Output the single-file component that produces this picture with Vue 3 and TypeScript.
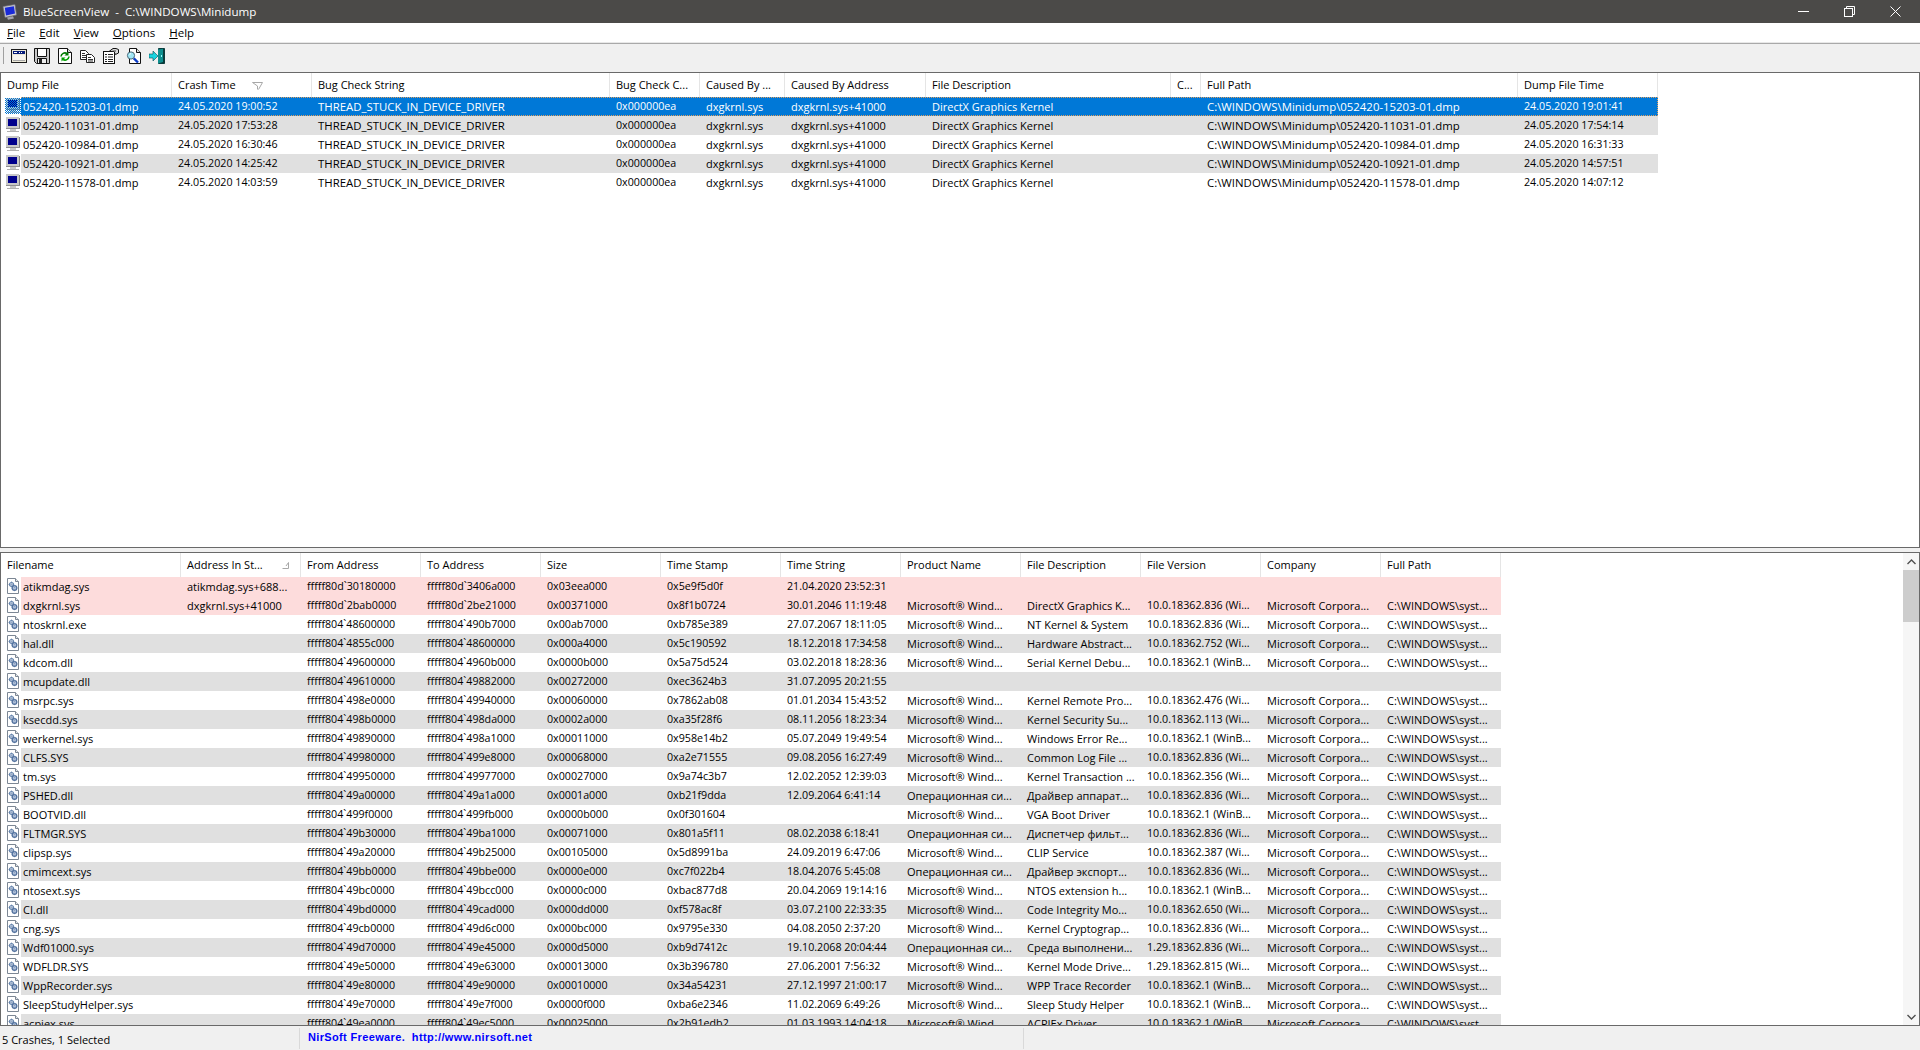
<script setup lang="ts">
interface Menu { label: string; key: string; rest: string }
const menus: Menu[] = [
  { label: 'File', key: 'F', rest: 'ile' },
  { label: 'Edit', key: 'E', rest: 'dit' },
  { label: 'View', key: 'V', rest: 'iew' },
  { label: 'Options', key: 'O', rest: 'ptions' },
  { label: 'Help', key: 'H', rest: 'elp' },
];

const titleText = 'BlueScreenView  -  C:\\WINDOWS\\Minidump';
const linkText = 'NirSoft Freeware.  http://www.nirsoft.net';

const tools = ['t-window', 't-floppy', 't-refresh', 't-copy', 't-props', 't-search', 't-exit'];

const topHeads = ['Dump File', 'Crash Time', 'Bug Check String', 'Bug Check C...', 'Caused By ...', 'Caused By Address', 'File Description', 'C...', 'Full Path', 'Dump File Time'];
const topCls = ['', 'n', 'w', 'n', '', '', '', '', 'w', 'n'];
const crash = [
  ['15203', '19:00:52', '19:01:41'],
  ['11031', '17:53:28', '17:54:14'],
  ['10984', '16:30:46', '16:31:33'],
  ['10921', '14:25:42', '14:57:51'],
  ['11578', '14:03:59', '14:07:12'],
];
const topRows: string[][] = crash.map(([id, a, b]) => [
  `052420-${id}-01.dmp`, `24.05.2020 ${a}`, 'THREAD_STUCK_IN_DEVICE_DRIVER', '0x000000ea', 'dxgkrnl.sys',
  'dxgkrnl.sys+41000', 'DirectX Graphics Kernel', '', `C:\\WINDOWS\\Minidump\\052420-${id}-01.dmp`, `24.05.2020 ${b}`,
]);

const botHeads = ['Filename', 'Address In St...', 'From Address', 'To Address', 'Size', 'Time Stamp', 'Time String', 'Product Name', 'File Description', 'File Version', 'Company', 'Full Path'];
const botCls = ['', '', 'n', 'n', 'n', 'n', 'n', '', '', 'n', '', ''];
const MS = 'Microsoft® Wind...';
const OS = 'Операционная си...';
const raw: [string, string, string, string, string, string, string, string, string, string][] = [
  ['atikmdag.sys', 'atikmdag.sys+688...', "fffff80d`30180000", "fffff80d`3406a000", '0x03eea000', '0x5e9f5d0f', '21.04.2020 23:52:31', '', '', ''],
  ['dxgkrnl.sys', 'dxgkrnl.sys+41000', "fffff80d`2bab0000", "fffff80d`2be21000", '0x00371000', '0x8f1b0724', '30.01.2046 11:19:48', MS, 'DirectX Graphics K...', '10.0.18362.836 (Wi...'],
  ['ntoskrnl.exe', '', "fffff804`48600000", "fffff804`490b7000", '0x00ab7000', '0xb785e389', '27.07.2067 18:11:05', MS, 'NT Kernel & System', '10.0.18362.836 (Wi...'],
  ['hal.dll', '', "fffff804`4855c000", "fffff804`48600000", '0x000a4000', '0x5c190592', '18.12.2018 17:34:58', MS, 'Hardware Abstract...', '10.0.18362.752 (Wi...'],
  ['kdcom.dll', '', "fffff804`49600000", "fffff804`4960b000", '0x0000b000', '0x5a75d524', '03.02.2018 18:28:36', MS, 'Serial Kernel Debu...', '10.0.18362.1 (WinB...'],
  ['mcupdate.dll', '', "fffff804`49610000", "fffff804`49882000", '0x00272000', '0xec3624b3', '31.07.2095 20:21:55', '', '', ''],
  ['msrpc.sys', '', "fffff804`498e0000", "fffff804`49940000", '0x00060000', '0x7862ab08', '01.01.2034 15:43:52', MS, 'Kernel Remote Pro...', '10.0.18362.476 (Wi...'],
  ['ksecdd.sys', '', "fffff804`498b0000", "fffff804`498da000", '0x0002a000', '0xa35f28f6', '08.11.2056 18:23:34', MS, 'Kernel Security Su...', '10.0.18362.113 (Wi...'],
  ['werkernel.sys', '', "fffff804`49890000", "fffff804`498a1000", '0x00011000', '0x958e14b2', '05.07.2049 19:49:54', MS, 'Windows Error Re...', '10.0.18362.1 (WinB...'],
  ['CLFS.SYS', '', "fffff804`49980000", "fffff804`499e8000", '0x00068000', '0xa2e71555', '09.08.2056 16:27:49', MS, 'Common Log File ...', '10.0.18362.836 (Wi...'],
  ['tm.sys', '', "fffff804`49950000", "fffff804`49977000", '0x00027000', '0x9a74c3b7', '12.02.2052 12:39:03', MS, 'Kernel Transaction ...', '10.0.18362.356 (Wi...'],
  ['PSHED.dll', '', "fffff804`49a00000", "fffff804`49a1a000", '0x0001a000', '0xb21f9dda', '12.09.2064 6:41:14', OS, 'Драйвер аппарат...', '10.0.18362.836 (Wi...'],
  ['BOOTVID.dll', '', "fffff804`499f0000", "fffff804`499fb000", '0x0000b000', '0x0f301604', '', MS, 'VGA Boot Driver', '10.0.18362.1 (WinB...'],
  ['FLTMGR.SYS', '', "fffff804`49b30000", "fffff804`49ba1000", '0x00071000', '0x801a5f11', '08.02.2038 6:18:41', OS, 'Диспетчер фильт...', '10.0.18362.836 (Wi...'],
  ['clipsp.sys', '', "fffff804`49a20000", "fffff804`49b25000", '0x00105000', '0x5d8991ba', '24.09.2019 6:47:06', MS, 'CLIP Service', '10.0.18362.387 (Wi...'],
  ['cmimcext.sys', '', "fffff804`49bb0000", "fffff804`49bbe000", '0x0000e000', '0xc7f022b4', '18.04.2076 5:45:08', OS, 'Драйвер экспорт...', '10.0.18362.836 (Wi...'],
  ['ntosext.sys', '', "fffff804`49bc0000", "fffff804`49bcc000", '0x0000c000', '0xbac877d8', '20.04.2069 19:14:16', MS, 'NTOS extension h...', '10.0.18362.1 (WinB...'],
  ['CI.dll', '', "fffff804`49bd0000", "fffff804`49cad000", '0x000dd000', '0xf578ac8f', '03.07.2100 22:33:35', MS, 'Code Integrity Mo...', '10.0.18362.650 (Wi...'],
  ['cng.sys', '', "fffff804`49cb0000", "fffff804`49d6c000", '0x000bc000', '0x9795e330', '04.08.2050 2:37:20', MS, 'Kernel Cryptograp...', '10.0.18362.836 (Wi...'],
  ['Wdf01000.sys', '', "fffff804`49d70000", "fffff804`49e45000", '0x000d5000', '0xb9d7412c', '19.10.2068 20:04:44', OS, 'Среда выполнени...', '1.29.18362.836 (Wi...'],
  ['WDFLDR.SYS', '', "fffff804`49e50000", "fffff804`49e63000", '0x00013000', '0x3b396780', '27.06.2001 7:56:32', MS, 'Kernel Mode Drive...', '1.29.18362.815 (Wi...'],
  ['WppRecorder.sys', '', "fffff804`49e80000", "fffff804`49e90000", '0x00010000', '0x34a54231', '27.12.1997 21:00:17', MS, 'WPP Trace Recorder', '10.0.18362.1 (WinB...'],
  ['SleepStudyHelper.sys', '', "fffff804`49e70000", "fffff804`49e7f000", '0x0000f000', '0xba6e2346', '11.02.2069 6:49:26', MS, 'Sleep Study Helper', '10.0.18362.1 (WinB...'],
  ['acpiex.sys', '', "fffff804`49ea0000", "fffff804`49ec5000", '0x00025000', '0x2b91edb2', '01.03.1993 14:04:18', MS, 'ACPIEx Driver', '10.0.18362.1 (WinB...'],
];
const botRows: string[][] = raw.map((r) => {
  const blank = r[7] === '';
  return [...r, blank ? '' : 'Microsoft Corpora...', blank ? '' : 'C:\\WINDOWS\\syst...'];
});
</script>

<template>
  <div class="app">
    <svg class="defs" aria-hidden="true">
      <defs>
        <pattern id="dither" width="2" height="2" patternUnits="userSpaceOnUse">
          <rect x="0" y="0" width="1" height="1" fill="#0078d7" />
          <rect x="1" y="1" width="1" height="1" fill="#0078d7" />
        </pattern>
        <symbol id="mon" viewBox="0 0 16 16">
          <rect x="1" y="0" width="13" height="11" fill="#c8c8c8" />
          <rect x="14" y="1" width="1" height="10" fill="#808080" />
          <rect x="1" y="11" width="14" height="1" fill="#909090" />
          <rect x="3" y="2" width="9" height="7" fill="#00008c" />
          <rect x="5" y="12" width="6" height="2" fill="#c8c8c8" />
          <rect x="2" y="14" width="12" height="1" fill="#b0b0b0" />
        </symbol>
        <symbol id="file" viewBox="0 0 16 16">
          <path d="M2.5 .5H10.5L13.5 3.5V15.5H2.5Z" fill="#fff" stroke="#7c8794" />
          <path d="M10.5 .5V3.5H13.5" fill="#e4e8ec" stroke="#7c8794" />
          <circle cx="6.5" cy="6.5" r="2" fill="#dfe6f0" stroke="#5f7fa8" stroke-width="1.2" />
          <circle cx="9.5" cy="10" r="2.3" fill="#c7d3e6" stroke="#4f6f9c" stroke-width="1.2" />
          <path d="M6.5 3.5V9.5M3.5 6.5H9.5M9.5 6.8V13.2M6.3 10H12.7" stroke="#6d88b0" stroke-width=".8" stroke-dasharray="1 1" />
        </symbol>
        <symbol id="t-window" viewBox="0 0 16 16">
          <rect x=".5" y="1.5" width="15" height="13" fill="#ece9d8" stroke="#1a1a1a" />
          <rect x="2" y="3" width="12" height="3" fill="#0a1f7a" />
          <rect x="3" y="4" width="3" height="1" fill="#fff" />
          <rect x="8" y="4" width="1" height="1" fill="#fff" />
          <rect x="10" y="4" width="1" height="1" fill="#fff" />
          <rect x="2" y="7" width="12" height="6" fill="#f8f6ee" />
          <rect x="2" y="12" width="12" height="1" fill="#a8a8a8" />
        </symbol>
        <symbol id="t-floppy" viewBox="0 0 16 16">
          <path d="M.5 .5H15.5V15.5H2.5L.5 13.5Z" fill="#c8c8c8" stroke="#111" />
          <rect x="3" y="1" width="10" height="7" fill="#fff" />
          <path d="M3.5 1V8.5H12.5V1" fill="none" stroke="#111" />
          <rect x="4" y="10" width="8" height="5" fill="#eee" />
          <path d="M3.5 15.5V10.5H12.5V15.5" fill="none" stroke="#111" />
          <rect x="5" y="11" width="3" height="4" fill="#222" />
        </symbol>
        <symbol id="t-refresh" viewBox="0 0 16 16">
          <path d="M1.5 .5H10.5L14.5 4.5V15.5H1.5Z" fill="#fff" stroke="#111" />
          <path d="M10.5 .5V4.5H14.5" fill="#ddd" stroke="#111" />
          <path d="M4 8.5A4 4 0 0 1 10 5.5" fill="none" stroke="#007a00" stroke-width="1.6" />
          <path d="M11.5 3.5V7.5H7.5Z" fill="#007a00" />
          <path d="M12 8.5A4 4 0 0 1 6 11.5" fill="none" stroke="#00a000" stroke-width="1.6" />
          <path d="M4.5 13.5V9.5H8.5Z" fill="#00a000" />
        </symbol>
        <symbol id="t-copy" viewBox="0 0 16 16">
          <path d="M.5 2.5H5.5L8.5 5.5V11.5H.5Z" fill="#fff" stroke="#222" />
          <path d="M2 5.5H5M2 7.5H7M2 9.5H7" stroke="#333" />
          <path d="M6.5 6.5H11.5L14.5 9.5V14.5H6.5Z" fill="#fff" stroke="#222" />
          <path d="M8 9.5H11M8 11.5H13M8 13H13" stroke="#333" />
        </symbol>
        <symbol id="t-props" viewBox="0 0 16 16">
          <rect x=".5" y="3.5" width="11" height="12" fill="#fff" stroke="#111" />
          <path d="M2 6.5H4M5 6.5H10M2 9H4M5 9H10M2 11.5H4M5 11.5H10M2 13.5H4M5 13.5H10" stroke="#222" />
          <path d="M6 3.5L10 .5H13L15.5 1.5V5L12.5 6.5L11 3.5Z" fill="#d8d8d8" stroke="#111" />
          <path d="M9.5 3H13" stroke="#444" />
        </symbol>
        <symbol id="t-search" viewBox="0 0 16 16">
          <path d="M3.5 .5H10.5L14.5 4.5V15.5H3.5Z" fill="#fff" stroke="#111" />
          <path d="M10.5 .5V4.5H14.5" fill="#ddd" stroke="#111" />
          <circle cx="5" cy="7.5" r="3.6" fill="#9fe6f5" stroke="#4a6a7a" />
          <path d="M7.8 10.3L12 14.5" stroke="#0a3cc8" stroke-width="2.4" />
          <path d="M3.5 6.5L5 5.5" stroke="#fff" />
        </symbol>
        <symbol id="t-exit" viewBox="0 0 16 16">
          <path d="M9.5 .5H15.5V15.5H9.5Z" fill="#0b3b3b" stroke="#0b3b3b" />
          <path d="M9 1.5L14 .8V14L9 15.5Z" fill="#0e8f8f" />
          <rect x="12" y="7" width="1" height="2" fill="#9ff" />
          <path d="M0 6H4V3L9 8L4 13V10H0Z" fill="#19d4e0" stroke="#0a4a50" stroke-width=".6" />
        </symbol>
        <symbol id="t-app" viewBox="0 0 16 16">
          <path d="M1 2.5L13 .5L14.5 11L3 13.5Z" fill="#c9c9d0" stroke="#6a6a78" stroke-width=".7" />
          <path d="M2.8 3.8L11.9 2.2L13 9.6L4 11.6Z" fill="#1a2ad8" />
          <path d="M5 13.5L11 12.3L12 14.5L6 15.7Z" fill="#a4a4ae" />
        </symbol>
      </defs>
    </svg>

    <header class="title">
      <svg class="app-icon"><use href="#t-app" /></svg>
      <span class="title-text">{{ titleText }}</span>
      <div class="win-btns">
        <svg width="11" height="11" viewBox="0 0 11 11"><path d="M0 5.5H11" stroke="#fff" /></svg>
        <svg width="11" height="11" viewBox="0 0 11 11"><path d="M2.5 2.5V.5H10.5V8.5H8.5" fill="none" stroke="#fff" /><rect x=".5" y="2.5" width="8" height="8" fill="none" stroke="#fff" /></svg>
        <svg width="11" height="11" viewBox="0 0 11 11"><path d="M.5 .5L10.5 10.5M10.5 .5L.5 10.5" stroke="#fff" /></svg>
      </div>
    </header>

    <nav class="menu">
      <span v-for="m in menus" :key="m.label" class="menu-item"><u>{{ m.key }}</u>{{ m.rest }}</span>
    </nav>

    <div class="toolbar">
      <i class="grip"></i>
      <svg v-for="t in tools" :key="t" class="tool"><use :href="'#' + t" /></svg>
    </div>

    <section class="pane top-pane">
      <div class="head grid-top">
        <div v-for="(h, i) in topHeads" :key="h" class="hcell">
          {{ h }}
          <svg v-if="i === 1" class="sort-a" width="11" height="8" viewBox="0 0 11 8"><path d="M.5 .5H10.5M.5 .5L5.5 4M5.5 4V7.5M10.5 .5L6.5 7.5" fill="none" stroke="#a8a8a8" /></svg>
        </div>
      </div>
      <div v-for="(r, ri) in topRows" :key="ri" class="row">
        <span class="ico">
          <svg class="i16"><use href="#mon" /></svg>
          <svg v-if="ri === 0" class="i16" viewBox="0 0 16 16"><rect width="16" height="16" fill="url(#dither)" /></svg>
        </span>
        <div class="cells grid-top" :class="{ sel: ri === 0, alt: ri % 2 === 1 }">
          <div v-for="(c, ci) in r" :key="ci" class="cell" :class="topCls[ci]">{{ c }}</div>
        </div>
      </div>
    </section>

    <div class="split"></div>

    <section class="pane bot-pane">
      <div class="list">
        <div class="head grid-bot">
          <div v-for="(h, i) in botHeads" :key="i" class="hcell">
            {{ h }}
            <svg v-if="i === 1" class="sort-b" width="7" height="7" viewBox="0 0 7 7"><path d="M6.5 .5V6.5H.5M6.5 .5L4 4" fill="none" stroke="#a8a8a8" /></svg>
          </div>
        </div>
        <div v-for="(r, ri) in botRows" :key="ri" class="row">
          <span class="ico"><svg class="i16"><use href="#file" /></svg></span>
          <div class="cells grid-bot" :class="ri < 2 ? 'pink' : { alt: ri % 2 === 1 }">
            <div v-for="(c, ci) in r" :key="ci" class="cell" :class="botCls[ci]">{{ c }}</div>
          </div>
        </div>
      </div>
      <div class="scroll">
        <svg class="arrow" width="9" height="6" viewBox="0 0 9 6"><path d="M.5 5L4.5 1L8.5 5" fill="none" stroke="#505050" stroke-width="1.4" /></svg>
        <div class="track"><div class="thumb"></div></div>
        <svg class="arrow" width="9" height="6" viewBox="0 0 9 6"><path d="M.5 1L4.5 5L8.5 1" fill="none" stroke="#505050" stroke-width="1.4" /></svg>
      </div>
    </section>

    <footer class="status">
      <div class="st st1">5 Crashes, 1 Selected</div>
      <div class="st st2"><span class="link">{{ linkText }}</span></div>
      <div class="st st3"></div>
    </footer>
  </div>
</template>

<style scoped>
.app {
  width: 1920px;
  height: 1050px;
  display: flex;
  flex-direction: column;
  overflow: hidden;
  background: #f0f0f0;
  font-family: "Open Sans", "Noto Sans", sans-serif;
  font-size: 11px;
  color: #000;
}
.defs { position: absolute; width: 0; height: 0; }

.title {
  flex: none;
  height: 23px;
  background: #4b4a48;
  color: #fff;
  display: flex;
  align-items: center;
}
.app-icon { width: 16px; height: 16px; margin: 0 5px 0 2px; flex: none; }
.title-text { font-size: 11.6px; white-space: pre; }
.win-btns {
  margin-left: auto;
  padding-right: 19px;
  display: flex;
  gap: 35px;
  align-items: center;
}

.menu {
  flex: none;
  height: 19px;
  background: #fff;
  border-bottom: 1px solid #e8e8e8;
  display: flex;
  align-items: center;
  padding-left: 7px;
  gap: 14px;
  font-size: 11.5px;
}
.menu-item { white-space: nowrap; }
.menu-item u { text-underline-offset: 1px; }

.toolbar {
  flex: none;
  height: 29px;
  box-sizing: border-box;
  border-top: 1px solid #a9a9a9;
  display: flex;
  align-items: center;
  gap: 7px;
  padding-left: 3px;
  padding-bottom: 5px;
}
.grip { width: 1px; height: 17px; background: #a0a0a0; }
.tool { width: 16px; height: 16px; flex: none; }

.pane {
  background: #fff;
  border: 1px solid #696969;
  box-sizing: border-box;
  overflow: hidden;
}
.top-pane { flex: none; height: 476px; }
.split { flex: none; height: 4px; }
.bot-pane { flex: none; height: 474px; display: flex; }
.list { flex: 1; min-width: 0; overflow: hidden; }

.grid-top {
  display: grid;
  grid-template-columns: 171px 140px 298px 90px 85px 141px 245px 30px 317px 140px;
  width: 1657px;
}
.grid-bot {
  display: grid;
  grid-template-columns: 180px repeat(11, 120px);
  width: 1500px;
}
.head { height: 24px; }
.hcell {
  position: relative;
  border-right: 1px solid #e5e5e5;
  padding-left: 6px;
  line-height: 24px;
  white-space: nowrap;
  overflow: hidden;
  box-sizing: border-box;
}
.sort-a { position: absolute; left: 80px; top: 9px; }
.sort-b { position: absolute; left: 101px; top: 9px; }

.row { position: relative; height: 19px; }
.ico { position: absolute; left: 0; top: 0; z-index: 1; width: 20px; height: 19px; background: #fff; }
.i16 { position: absolute; left: 4px; top: 1px; width: 16px; height: 16px; }
.cells { height: 19px; }
.cells.alt { background: #e0e0e0; }
.cells.pink { background: #fddcdc; }
.cells.sel {
  background: #0078d7;
  color: #fff;
  outline: 1px dotted #e0a060;
  outline-offset: -1px;
}
.cell {
  padding-left: 6px;
  line-height: 19px;
  white-space: nowrap;
  overflow: hidden;
}
.cell:first-child { padding-left: 22px; }
.cell.n { font-size: 10.7px; }
.cell.w { font-size: 11.4px; }

.scroll {
  flex: none;
  width: 16px;
  background: #f6f6f6;
  display: flex;
  flex-direction: column;
  align-items: center;
}
.arrow { flex: none; margin: 6px 0 5px; }
.track { flex: 1; width: 100%; }
.thumb { height: 52px; background: #cdcdcd; }

.status {
  flex: 1;
  display: flex;
  padding-top: 2px;
}
.st {
  box-sizing: border-box;
  height: 21px;
  border-right: 1px solid #d9d9d9;
  white-space: nowrap;
}
.st1 { width: 300px; padding-left: 2px; line-height: 24px; }
.st2 { width: 724px; padding-left: 8px; line-height: 18px; }
.st3 { flex: 1; border-right: 0; }
.link {
  font-family: "Liberation Sans", sans-serif;
  font-weight: 700;
  font-size: 11px;
  letter-spacing: .35px;
  color: #0000ff;
  white-space: pre;
}
</style>
